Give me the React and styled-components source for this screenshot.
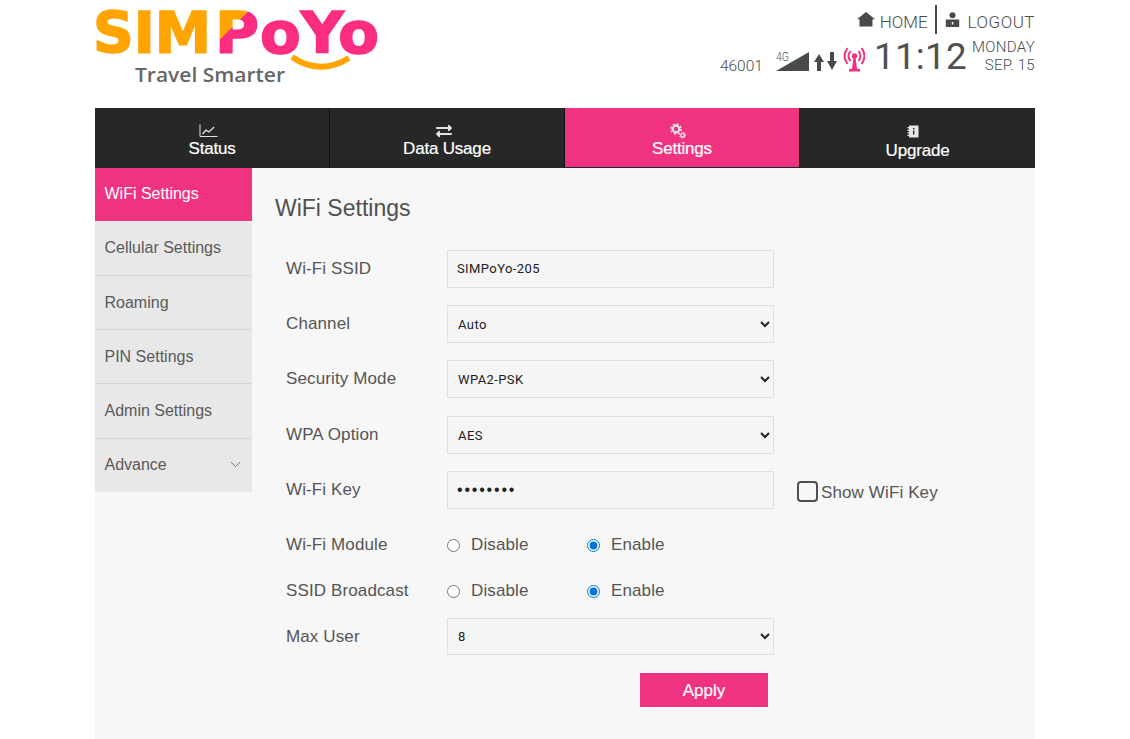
import React from "react";
import styled, { createGlobalStyle } from "styled-components";
import { FaExchangeAlt } from "react-icons/fa";

const GlobalStyle = createGlobalStyle`
  html, body { margin: 0; padding: 0; background: #fff; height: 739px; overflow: hidden; }
  * { box-sizing: border-box; }
  body { font-family: "Liberation Sans", Arial, sans-serif; color: #4a4a4a; }
`;

const Page = styled.div`
  width: 940px;
  margin: 0 auto;
  height: 739px;
  display: flex;
  flex-direction: column;
`;

const Header = styled.header`
  height: 108px;
  display: flex;
  justify-content: space-between;
`;

const LogoSvg = styled.svg`
  width: 290px;
  height: 90px;
  display: block;
  overflow: visible;
`;

const HeaderRight = styled.div`
  display: flex;
  flex-direction: column;
  align-items: flex-end;
  padding-top: 5px;
  font-family: Roboto, "Liberation Sans", sans-serif;
  color: #4a4a4a;
`;

const TopLinks = styled.div`
  display: flex;
  align-items: center;
  height: 29px;
  font-size: 17px;
  font-weight: 300;
`;

const TopLink = styled.a`
  display: flex;
  align-items: center;
  gap: ${(p) => p.$gap}px;
  padding-top: 5px;
  letter-spacing: ${(p) => p.$spacing}px;
`;

const VBar = styled.span`
  width: 2px;
  height: 29px;
  background: #4a4a4a;
  margin: 0 8px 0 7px;
`;

const StatusRow = styled.div`
  display: flex;
  align-items: flex-end;
  height: 37px;
  margin-top: 3px;
`;

const Carrier = styled.span`
  font-size: 15.5px;
  font-weight: 300;
  line-height: 16px;
  margin-right: 11px;
`;

const SignalIcons = styled.svg`
  width: 91px;
  height: 28px;
  display: block;
  margin-bottom: 1px;
`;

const Clock = styled.span`
  font-size: 36.8px;
  line-height: 35px;
  margin-left: 9px;
  letter-spacing: 0.3px;
  font-weight: 400;
  color: #505050;
`;

const DateBox = styled.div`
  display: flex;
  flex-direction: column;
  align-items: flex-end;
  font-size: 15px;
  font-weight: 300;
  line-height: 18px;
  margin-left: 5px;
  letter-spacing: 0.3px;
`;

const Nav = styled.nav`
  height: 60px;
  display: grid;
  grid-template-columns: repeat(4, 1fr);
  background: #272727;
`;

const NavItem = styled.a`
  display: flex;
  flex-direction: column;
  align-items: center;
  padding-top: 15px;
  color: #fff;
  font-size: 17px;
  line-height: 20px;
  letter-spacing: -0.2px;
  -webkit-text-stroke: 0.2px #fff;
  background: ${(p) => (p.$active ? "#f03381" : "transparent")};
  border-right: ${(p) => (p.$last ? "none" : "1px solid #0f0f0f")};
  border-bottom: ${(p) => (p.$active ? "1px solid #272727" : "none")};
`;

const NavIcon = styled.span`
  height: 16px;
  display: flex;
  align-items: center;
  color: #e2e2e2;
  margin-bottom: ${(p) => p.$gap}px;
  margin-right: ${(p) => p.$shift}px;
`;

const Body = styled.div`
  flex: 1;
  display: flex;
  background: #f7f7f7;
  min-height: 0;
`;

const Side = styled.aside`
  width: 157px;
  flex: none;
`;

const SideItem = styled.a`
  display: flex;
  align-items: center;
  justify-content: space-between;
  height: ${(p) => p.$h}px;
  padding: 0 11px ${(p) => (p.$line ? 0 : 2)}px 9.5px;
  font-size: 16px;
  color: ${(p) => (p.$active ? "#fff" : "#5a5a5a")};
  background: ${(p) => (p.$active ? "#f03381" : "#e8e8e8")};
  border-bottom: ${(p) => (p.$line ? "1px solid #d5d5d5" : "none")};
`;

const Main = styled.main`
  flex: 1;
  padding: 25px 0 0 23px;
`;

const Title = styled.h1`
  margin: 0 0 27px;
  font-size: 23px;
  font-weight: 400;
  line-height: 30px;
  color: #505050;
`;

const Form = styled.div`
  display: flex;
  flex-direction: column;
  padding-left: 11px;
`;

const Row = styled.div`
  display: flex;
  align-items: center;
  height: ${(p) => p.$h}px;
  margin-bottom: ${(p) => p.$mb}px;
`;

const Label = styled.label`
  width: 161px;
  flex: none;
  font-size: 17px;
  letter-spacing: 0.12px;
  color: #555;
`;

const fieldCss = `
  width: 327px;
  height: 100%;
  background: #f5f5f5;
  border: 1px solid #dfdfdf;
  border-radius: 0;
  color: #222;
  font-family: Roboto, "Liberation Sans", sans-serif;
  font-size: 13px;
  letter-spacing: 0.4px;
  outline: none;
  margin: 0;
`;

const Input = styled.input`
  ${fieldCss}
  padding: 0 9px 1px;
`;

const KeyInput = styled.input`
  ${fieldCss}
  padding: 0 9px;
  font-family: "Liberation Sans", sans-serif;
  font-size: 16px;
  letter-spacing: 1.8px;
`;

const Select = styled.select`
  ${fieldCss}
  padding: 0 6px;
`;

const ShowKey = styled.label`
  display: flex;
  align-items: flex-end;
  margin-left: 23px;
  font-size: 17px;
  letter-spacing: 0.12px;
  color: #555;
  margin-top: 3px;
`;

const BigCheck = styled.span`
  width: 21px;
  height: 21px;
  border: 2px solid #4f4f4f;
  border-radius: 4px;
  margin-right: 3px;
  margin-bottom: 1px;
`;

const RadioGroup = styled.label`
  display: flex;
  align-items: center;
  width: 140px;
  font-size: 17px;
  letter-spacing: 0.12px;
  color: #555;
`;

const Radio = styled.input`
  width: 13px;
  height: 13px;
  margin: 0 11px 0 0;
  accent-color: #0075db;
`;

const ApplyRow = styled.div`
  display: flex;
  padding-left: 354px;
  margin-top: 18px;
`;

const Apply = styled.button`
  width: 128px;
  height: 34px;
  border: none;
  background: #f03381;
  color: #fff;
  font-family: "Liberation Sans", Arial, sans-serif;
  font-size: 17px;
  -webkit-text-stroke: 0.2px #fff;
  padding: 1px 0 0;
`;

const Chevron = () => (
  <svg width="11" height="7" viewBox="0 0 11 7" fill="none" stroke="#777" strokeWidth="1">
    <path d="M0.8 1 L5.5 5.6 L10.2 1" />
  </svg>
);

const HomeIcon = () => (
  <svg width="18" height="15" viewBox="0 0 18 15" fill="#4a4a4a" style={{ marginTop: -6 }}>
    <path d="M9 0 L18 7.2 H15.5 V14.5 H2.5 V7.2 H0 Z" />
  </svg>
);

const LogoutIcon = () => (
  <svg width="15" height="16" viewBox="0 0 15 16" fill="#4a4a4a" style={{ marginTop: -4 }}>
    <circle cx="7.5" cy="3.2" r="3" />
    <path d="M0.8 7.5h13.4v7.5H0.8z" />
    <path d="M6.8 10h1.5v2.5H6.8z" fill="#fff" />
  </svg>
);

const ChartIcon = () => (
  <svg width="19" height="14" viewBox="0 0 19 14" fill="none" stroke="#e2e2e2">
    <path d="M1 0.5V12.5H18.5" strokeWidth="1" />
    <path d="M3.5 10L7 6.2L10 8L15 3" strokeWidth="1.3" />
  </svg>
);

const GearsIcon = () => (
  <svg width="16" height="16" viewBox="0 0 16 16" fill="none" stroke="#e2e2e2">
    <circle cx="6" cy="6" r="3.3" strokeWidth="2.2" />
    <circle cx="6" cy="6" r="5" strokeWidth="1.6" strokeDasharray="2 1.93" />
    <circle cx="12.6" cy="12.2" r="1.8" strokeWidth="1.4" />
    <circle cx="12.6" cy="12.2" r="3" strokeWidth="1" strokeDasharray="1.3 1.06" />
  </svg>
);

const BookIcon = () => (
  <svg width="12" height="13" viewBox="0 0 12 13">
    <path d="M2 0.5h9.5v12H2z" fill="#e8e8e8" />
    <path d="M0.5 2h2.5v1.3H0.5zM0.5 4.6h2.5v1.3H0.5zM0.5 7.2h2.5v1.3H0.5zM0.5 9.8h2.5v1.3H0.5z" fill="#e8e8e8" />
    <path d="M6 3h1.4v1.4H6zM6 5.5h1.4v4H6z" fill="#272727" />
  </svg>
);

const logoFont = { fontFamily: "'DejaVu Sans', sans-serif", fontWeight: 700, fontSize: 57, strokeWidth: 1.6 };

const Logo = () => (
  <LogoSvg viewBox="0 0 290 90">
    <defs>
      <linearGradient id="pSplit" gradientUnits="userSpaceOnUse" x1="70" y1="45" x2="120" y2="95">
        <stop offset="0.5" stopColor="#ffa400" />
        <stop offset="0.5" stopColor="#fb2d80" />
      </linearGradient>
    </defs>
    <text x="-2" y="53" style={logoFont} fill="#ffa400" stroke="#ffa400" textLength="118" lengthAdjust="spacingAndGlyphs">SIM</text>
    <text x="120" y="53" style={logoFont} fill="url(#pSplit)" stroke="url(#pSplit)" textLength="44" lengthAdjust="spacingAndGlyphs">P</text>
    <text x="165" y="53" style={logoFont} fill="#fb2d80" stroke="#fb2d80" textLength="119" lengthAdjust="spacingAndGlyphs">oYo</text>
    <path d="M197 57 Q225 76 254 58" fill="none" stroke="#ffa400" strokeWidth="6" />
    <text x="40" y="82" fontFamily="'Open Sans', sans-serif" fontWeight="600" fontSize="20" fill="#666" textLength="150" lengthAdjust="spacingAndGlyphs">Travel Smarter</text>
  </LogoSvg>
);

const Signal = () => (
  <SignalIcons viewBox="0 0 91 28">
    <text x="2" y="16" fontFamily="Roboto, sans-serif" fontWeight="300" fontSize="12" fill="#4a4a4a" textLength="13" lengthAdjust="spacingAndGlyphs">4G</text>
    <path d="M2 26 L35 7 V26 Z" fill="#4a4a4a" />
    <path d="M45 9 L50 17 H47 V26 H43 V17 H40 Z" fill="#4a4a4a" />
    <path d="M56 7 H60 V16 H63 L58 25 L53 16 H56 Z" fill="#4a4a4a" />
    <g fill="none" stroke="#f5307f" strokeWidth="2">
      <path d="M76.5 6 Q72.5 11 76.5 16" />
      <path d="M73.5 3 Q67.5 11 73.5 19" />
      <path d="M84.5 6 Q88.5 11 84.5 16" />
      <path d="M87.5 3 Q93.5 11 87.5 19" />
    </g>
    <circle cx="80.5" cy="11" r="2.7" fill="#f5307f" />
    <path d="M79.5 12 H81.5 L83 24 H86 V26.5 H75 V24 H78 Z" fill="#f5307f" />
  </SignalIcons>
);

const FormRow = ({ label, children, h = 38, mb = 17 }) => (
  <Row $h={h} $mb={mb}>
    <Label>{label}</Label>
    {children}
  </Row>
);

const RadioPair = ({ name }) => (
  <>
    <RadioGroup><Radio type="radio" name={name} />Disable</RadioGroup>
    <RadioGroup><Radio type="radio" name={name} defaultChecked />Enable</RadioGroup>
  </>
);

export default function App() {
  return (
    <Page>
      <GlobalStyle />
      <Header>
        <Logo />
        <HeaderRight>
          <TopLinks>
            <TopLink $gap={5} $spacing={0}><HomeIcon />HOME</TopLink>
            <VBar />
            <TopLink $gap={8} $spacing={0.5}><LogoutIcon />LOGOUT</TopLink>
          </TopLinks>
          <StatusRow>
            <Carrier>46001</Carrier>
            <Signal />
            <Clock>11:12</Clock>
            <DateBox><span>MONDAY</span><span>SEP. 15</span></DateBox>
          </StatusRow>
        </HeaderRight>
      </Header>
      <Nav>
        <NavItem><NavIcon $gap={0} $shift={8}><ChartIcon /></NavIcon>Status</NavItem>
        <NavItem><NavIcon $gap={0} $shift={6}><FaExchangeAlt size={16} /></NavIcon>Data Usage</NavItem>
        <NavItem $active><NavIcon $gap={0} $shift={9}><GearsIcon /></NavIcon>Settings</NavItem>
        <NavItem $last><NavIcon $gap={2} $shift={9}><BookIcon /></NavIcon>Upgrade</NavItem>
      </Nav>
      <Body>
        <Side>
          <SideItem $active $h={53}>WiFi Settings</SideItem>
          <SideItem $line $h={55}>Cellular Settings</SideItem>
          <SideItem $line $h={54}>Roaming</SideItem>
          <SideItem $line $h={54}>PIN Settings</SideItem>
          <SideItem $line $h={55}>Admin Settings</SideItem>
          <SideItem $h={53}>Advance<Chevron /></SideItem>
        </Side>
        <Main>
          <Title>WiFi Settings</Title>
          <Form>
            <FormRow label="Wi-Fi SSID"><Input defaultValue="SIMPoYo-205" /></FormRow>
            <FormRow label="Channel"><Select defaultValue="Auto"><option>Auto</option></Select></FormRow>
            <FormRow label="Security Mode" mb={18}><Select defaultValue="WPA2-PSK"><option>WPA2-PSK</option></Select></FormRow>
            <FormRow label="WPA Option"><Select defaultValue="AES"><option>AES</option></Select></FormRow>
            <FormRow label="Wi-Fi Key" mb={21}>
              <KeyInput type="password" defaultValue="12345678" />
              <ShowKey><BigCheck />Show WiFi Key</ShowKey>
            </FormRow>
            <FormRow label="Wi-Fi Module" h={30} mb={16}><RadioPair name="m" /></FormRow>
            <FormRow label="SSID Broadcast" h={30} mb={12}><RadioPair name="b" /></FormRow>
            <FormRow label="Max User" h={37} mb={0}><Select defaultValue="8"><option>8</option></Select></FormRow>
            <ApplyRow><Apply>Apply</Apply></ApplyRow>
          </Form>
        </Main>
      </Body>
    </Page>
  );
}
